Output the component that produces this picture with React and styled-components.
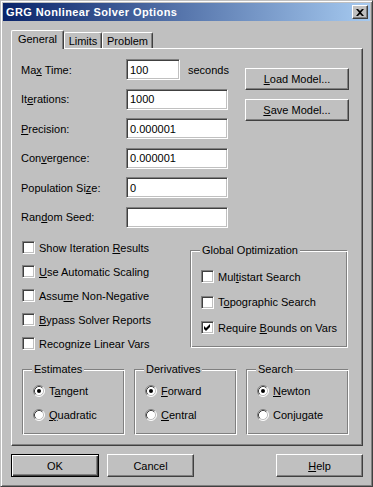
import React from "react";
import styled, { createGlobalStyle } from "styled-components";

const FACE = "#c0c0c0";
const FONT = `"Liberation Sans", Arial, sans-serif`;

const Global = createGlobalStyle`
  html, body { margin: 0; padding: 0; background: ${FACE}; }
  body { font-family: ${FONT}; font-size: 11px; color: #000; }
  * { box-sizing: border-box; }
`;

const Window = styled.div`
  width: 373px;
  height: 487px;
  background: ${FACE};
  border: 1px solid;
  border-color: ${FACE} #404040 #404040 ${FACE};
  box-shadow: inset 1px 1px #fff, inset -1px -1px #808080;
  padding: 2px;
  display: flex;
  flex-direction: column;
`;

const TitleBar = styled.div`
  height: 18px;
  flex: none;
  display: flex;
  align-items: center;
  padding: 0 2px 0 3px;
  background: linear-gradient(to right, #0a246a, #a6caf0);
  color: #fff;
  font-weight: bold;
  font-size: 11px;
  letter-spacing: 0.4px;
`;

const CloseButton = styled.div`
  margin-left: auto;
  width: 16px;
  height: 14px;
  background: ${FACE};
  border: 1px solid;
  border-color: #fff #404040 #404040 #fff;
  box-shadow: inset -1px -1px #808080;
  display: flex;
  align-items: center;
  justify-content: center;
  padding-right: 1px;
`;

const Body = styled.div`
  flex: 1;
  display: flex;
  flex-direction: column;
  padding: 9px 7px 7px 8px;
`;

const TabStrip = styled.div`
  height: 18px;
  display: flex;
  align-items: flex-end;
  position: relative;
  z-index: 1;
`;

const Tab = styled.div`
  height: ${(p) => (p.$active ? "19px" : "16px")};
  margin-bottom: ${(p) => (p.$active ? "-1px" : "0")};
  width: ${(p) => p.$w}px;
  background: ${FACE};
  border: 1px solid;
  border-bottom: none;
  border-color: #fff #404040 #404040 #fff;
  border-radius: 2px 2px 0 0;
  box-shadow: inset -1px 0 #808080;
  display: flex;
  align-items: ${(p) => (p.$active ? "flex-start" : "center")};
  padding-top: ${(p) => (p.$active ? "2px" : "0")};
  justify-content: center;
`;

const Panel = styled.div`
  flex: 1;
  border: 1px solid;
  border-color: #fff #404040 #404040 #fff;
  box-shadow: inset -1px -1px #808080;
  padding: 10px 9px 0 9px;
  display: flex;
  flex-direction: column;
`;

const TopSection = styled.div`
  display: flex;
`;

const Fields = styled.div`
  display: flex;
  flex-direction: column;
  gap: 8.5px;
  width: 207px;
`;

const FieldRow = styled.div`
  height: 21px;
  display: flex;
  align-items: center;
`;

const Label = styled.span`
  width: 105px;
  flex: none;
`;

const TextBox = styled.div`
  width: ${(p) => p.$w}px;
  height: 21px;
  flex: none;
  background: #fff;
  border: 1px solid;
  border-color: #808080 #fff #fff #808080;
  box-shadow: inset 1px 1px #404040, inset -1px -1px ${FACE};
  padding: 0 3px;
  display: flex;
  align-items: center;
  white-space: nowrap;
`;

const Unit = styled.span`
  margin-left: 8px;
  white-space: nowrap;
`;

const SideButtons = styled.div`
  margin-left: 17px;
  padding-top: 9px;
  display: flex;
  flex-direction: column;
  gap: 9px;
`;

const Button = styled.div`
  width: ${(p) => p.$w}px;
  height: ${(p) => p.$h}px;
  background: ${FACE};
  border: 1px solid;
  border-color: ${(p) => (p.$default ? "#000" : "#fff #404040 #404040 #fff")};
  box-shadow: ${(p) =>
    p.$default
      ? "inset 1px 1px #fff, inset -1px -1px #404040, inset -2px -2px #808080"
      : "inset -1px -1px #808080"};
  display: flex;
  align-items: center;
  justify-content: center;
  margin-left: ${(p) => (p.$push ? "auto" : "0")};
`;

const MidSection = styled.div`
  display: flex;
  margin-top: 8px;
`;

const CheckList = styled.div`
  width: 168px;
  margin-left: 1px;
  display: flex;
  flex-direction: column;
`;

const OptionRow = styled.div`
  height: ${(p) => p.$h}px;
  display: flex;
  align-items: center;
  gap: 4px;
  white-space: nowrap;
`;

const Box = styled.span`
  width: 13px;
  height: 13px;
  flex: none;
  background: #fff;
  border: 1px solid;
  border-color: #808080 #fff #fff #808080;
  box-shadow: inset 1px 1px #404040, inset -1px -1px ${FACE};
  display: flex;
  align-items: center;
  justify-content: center;
`;

const Group = styled.div`
  position: relative;
  width: ${(p) => p.$w}px;
  height: ${(p) => p.$h}px;
  margin-top: ${(p) => p.$mt || 0}px;
  border: 1px solid;
  border-color: #808080 #fff #fff #808080;
  box-shadow: inset 1px 1px #fff, inset -1px -1px #808080;
  padding: ${(p) => p.$pt}px 0 0 10px;
  display: flex;
  flex-direction: column;
`;

const GroupTitle = styled.span`
  position: absolute;
  top: -7px;
  left: 9px;
  padding: 0 2px;
  line-height: 13px;
  background: ${FACE};
  white-space: nowrap;
`;

const BottomSection = styled.div`
  display: grid;
  grid-template-columns: 103px 103px 103px;
  column-gap: 9px;
  margin-top: 13.5px;
  margin-left: 1px;
`;

const Footer = styled.div`
  display: flex;
  gap: 8px;
  margin-top: 8px;
`;

const Key = styled.span`
  text-decoration: underline;
  text-underline-offset: 1px;
`;

function CheckBox({ checked }) {
  return (
    <Box>
      {checked && (
        <svg width="7" height="7" viewBox="0 0 7 7">
          <path d="M0 2 L2 4 L6 0 L6 3 L2 7 L0 5 Z" fill="#000" />
        </svg>
      )}
    </Box>
  );
}

function Radio({ checked }) {
  return (
    <svg width="12" height="12" viewBox="0 0 12 12" style={{ flex: "none" }}>
      <circle cx="6" cy="6" r="5" fill="#fff" />
      <path d="M2.11 9.89 A5.5 5.5 0 0 1 9.89 2.11" fill="none" stroke="#808080" strokeWidth="1" />
      <path d="M9.89 2.11 A5.5 5.5 0 0 1 2.11 9.89" fill="none" stroke="#fff" strokeWidth="1" />
      <path d="M2.82 9.18 A4.5 4.5 0 0 1 9.18 2.82" fill="none" stroke="#404040" strokeWidth="1" />
      <path d="M9.18 2.82 A4.5 4.5 0 0 1 2.82 9.18" fill="none" stroke={FACE} strokeWidth="1" />
      {checked && <circle cx="6" cy="6" r="2" fill="#000" />}
    </svg>
  );
}

const fields = [
  { label: <>Ma<Key>x</Key> Time:</>, value: "100", w: 54, unit: "seconds" },
  { label: <>It<Key>e</Key>rations:</>, value: "1000", w: 102 },
  { label: <><Key>P</Key>recision:</>, value: "0.000001", w: 102 },
  { label: <>Con<Key>v</Key>ergence:</>, value: "0.000001", w: 102 },
  { label: <>Population Si<Key>z</Key>e:</>, value: "0", w: 102 },
  { label: <>Ran<Key>d</Key>om Seed:</>, value: "", w: 102 },
];

const checks = [
  <>Show Iteration <Key>R</Key>esults</>,
  <><Key>U</Key>se Automatic Scaling</>,
  <>Assu<Key>m</Key>e Non-Negative</>,
  <><Key>B</Key>ypass Solver Reports</>,
  <>Recognize Linear Vars</>,
];

const globalOpts = [
  { label: <>Mul<Key>t</Key>istart Search</>, checked: false },
  { label: <>T<Key>o</Key>pographic Search</>, checked: false },
  { label: <>Require <Key>B</Key>ounds on Vars</>, checked: true },
];

const radioGroups = [
  { title: "Estimates", options: [<>T<Key>a</Key>ngent</>, <><Key>Q</Key>uadratic</>] },
  { title: "Derivatives", options: [<><Key>F</Key>orward</>, <><Key>C</Key>entral</>] },
  { title: "Search", options: [<><Key>N</Key>ewton</>, <>Conjugate</>] },
];

export default function App() {
  return (
    <>
      <Global />
      <Window>
        <TitleBar>
          <span>GRG Nonlinear Solver Options</span>
          <CloseButton>
            <svg width="8" height="7" viewBox="0 0 8 7">
              <path d="M0 0h2l2 2l2-2h2l-3 3.5l3 3.5h-2l-2-2l-2 2h-2l3-3.5z" fill="#000" />
            </svg>
          </CloseButton>
        </TitleBar>
        <Body>
          <TabStrip>
            <Tab $active $w={53}>General</Tab>
            <Tab $w={38}>Limits</Tab>
            <Tab $w={51}>Problem</Tab>
          </TabStrip>
          <Panel>
            <TopSection>
              <Fields>
                {fields.map((f, i) => (
                  <FieldRow key={i}>
                    <Label>{f.label}</Label>
                    <TextBox $w={f.w}>{f.value}</TextBox>
                    {f.unit && <Unit>{f.unit}</Unit>}
                  </FieldRow>
                ))}
              </Fields>
              <SideButtons>
                <Button $w={104} $h={22}><Key>L</Key>oad Model...</Button>
                <Button $w={104} $h={22}><Key>S</Key>ave Model...</Button>
              </SideButtons>
            </TopSection>
            <MidSection>
              <CheckList>
                {checks.map((c, i) => (
                  <OptionRow key={i} $h={24}>
                    <CheckBox />
                    <span>{c}</span>
                  </OptionRow>
                ))}
              </CheckList>
              <Group $w={158} $h={98} $mt={14.5} $pt={12.75}>
                <GroupTitle>Global Optimization</GroupTitle>
                {globalOpts.map((o, i) => (
                  <OptionRow key={i} $h={25.5}>
                    <CheckBox checked={o.checked} />
                    <span>{o.label}</span>
                  </OptionRow>
                ))}
              </Group>
            </MidSection>
            <BottomSection>
              {radioGroups.map((g, gi) => (
                <Group key={gi} $w={103} $h={66} $pt={9}>
                  <GroupTitle>{g.title}</GroupTitle>
                  {g.options.map((o, i) => (
                    <OptionRow key={i} $h={24}>
                      <Radio checked={i === 0} />
                      <span>{o}</span>
                    </OptionRow>
                  ))}
                </Group>
              ))}
            </BottomSection>
          </Panel>
          <Footer>
            <Button $w={88} $h={23} $default>OK</Button>
            <Button $w={87} $h={23}>Cancel</Button>
            <Button $w={87} $h={23} $push><Key>H</Key>elp</Button>
          </Footer>
        </Body>
      </Window>
    </>
  );
}
